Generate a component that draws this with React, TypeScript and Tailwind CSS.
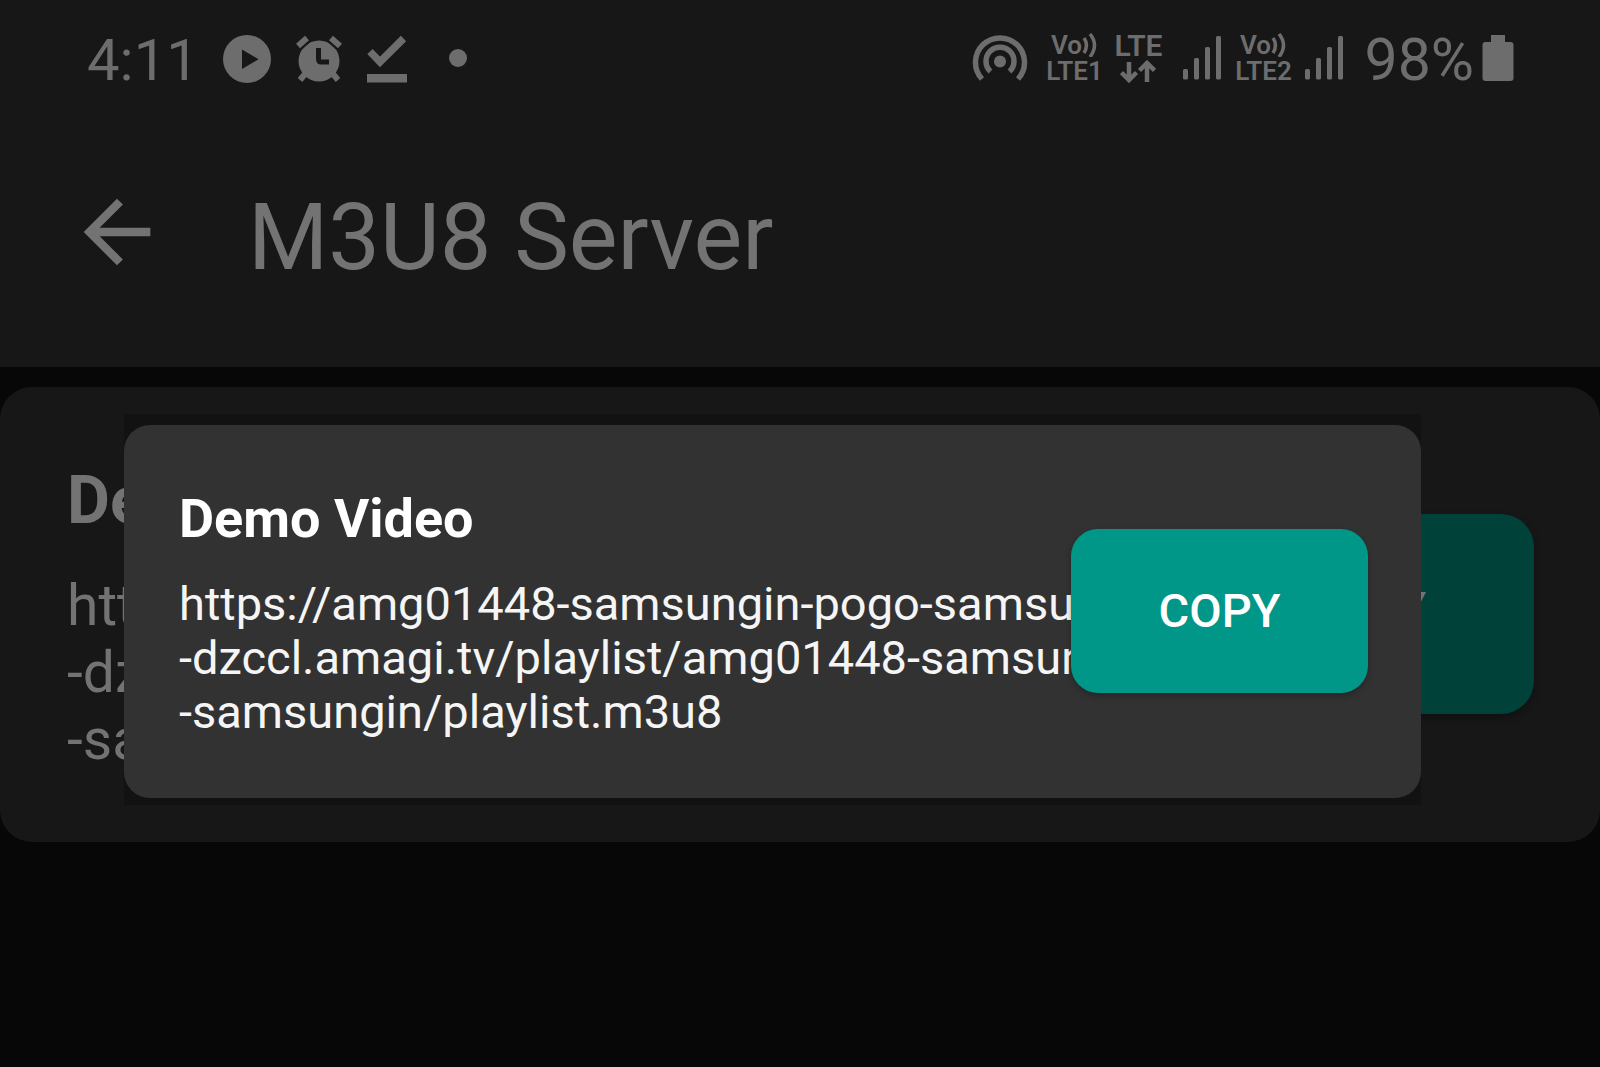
import React from "react";

const URL_LINES = [
  "https://amg01448-samsungin-pogo-samsu",
  "-dzccl.amagi.tv/playlist/amg01448-samsun",
  "-samsungin/playlist.m3u8",
];

function PlayIcon() {
  return (
    <svg className="size-12 shrink-0" viewBox="0 0 48 48" aria-hidden="true">
      <path
        fill="currentColor"
        fillRule="evenodd"
        d="M24 0a24 24 0 1 1 0 48a24 24 0 1 1 0-48zM19 14.500v19.500l16.500-9.750z"
      />
    </svg>
  );
}

function AlarmIcon() {
  return (
    <svg className="size-12 shrink-0" viewBox="0 0 48 48" fill="none" aria-hidden="true">
      <circle cx="24" cy="26" r="20.500" fill="currentColor" />
      <g stroke="currentColor" strokeWidth="6">
        <path d="M3 11L12 3" />
        <path d="M45 11L36 3" />
        <path d="M10 39L5 45" />
        <path d="M38 39L43 45" />
      </g>
      <path d="M5.500 15.500L16.500 5.500" stroke="#171717" strokeWidth="1" />
      <path d="M42.500 15.500L31.500 5.500" stroke="#171717" strokeWidth="1" />
      <path d="M23.500 13v11q0 3 3 3h7.500" stroke="#171717" strokeWidth="5" />
    </svg>
  );
}

function DoneIcon() {
  return (
    <svg className="h-12 w-10 shrink-0" viewBox="0 0 40 48" fill="none" aria-hidden="true">
      <path d="M3 16.500L13 27L36.500 3.500" stroke="currentColor" strokeWidth="7.500" />
      <rect x="0" y="39" width="40" height="8.500" fill="currentColor" />
    </svg>
  );
}

function HotspotIcon() {
  return (
    <svg className="h-12 w-14 shrink-0" viewBox="0 0 56 48" fill="none" aria-hidden="true">
      <circle cx="28" cy="27.500" r="6" fill="currentColor" />
      <g stroke="currentColor" strokeWidth="5.500">
        <path d="M18.500 37.500A14 14 0 1 1 37.500 37.500" />
        <path d="M10 45A24.500 24.500 0 1 1 46 45" />
      </g>
    </svg>
  );
}

function VolteLabel({ sim }: { sim: string }) {
  return (
    <div className="flex w-[60px] shrink-0 flex-col items-center text-[26px] font-semibold leading-[26px]">
      <div className="flex items-center">
        <span>Vo</span>
        <svg className="h-6 w-4" viewBox="0 0 16 24" fill="none" stroke="currentColor" strokeWidth="3.500" aria-hidden="true">
          <path d="M2 5Q7 12 2 20" />
          <path d="M8 1Q17 12 8 24" />
        </svg>
      </div>
      <span>{sim}</span>
    </div>
  );
}

function LteData() {
  return (
    <div className="flex w-[52px] shrink-0 flex-col items-center">
      <span className="text-[30px] font-semibold leading-[28px]">LTE</span>
      <svg className="h-6 w-9" viewBox="0 0 36 24" fill="none" stroke="currentColor" strokeWidth="4.500" aria-hidden="true">
        <path d="M9 2v17M1.500 12.500L9 20L16.500 12.500" />
        <path d="M27 22V4M19.500 10.500L27 3L34.500 10.500" />
      </svg>
    </div>
  );
}

function SignalIcon() {
  return (
    <svg className="h-11 w-10 shrink-0" viewBox="0 0 40 44" fill="currentColor" aria-hidden="true">
      <rect x="1" y="33" width="5" height="10.500" rx="1.500" />
      <rect x="12" y="22" width="5" height="21.500" rx="1.500" />
      <rect x="23" y="11" width="5" height="32.500" rx="1.500" />
      <rect x="34" y="0" width="5" height="43.500" rx="1.500" />
    </svg>
  );
}

function BatteryIcon() {
  return (
    <svg className="h-[46px] w-8 shrink-0" viewBox="0 0 32 46" fill="currentColor" aria-hidden="true">
      <path d="M9 0h14v7h5.500a3 3 0 0 1 3 3v33a3 3 0 0 1-3 3h-25a3 3 0 0 1-3-3V10a3 3 0 0 1 3-3H9z" />
    </svg>
  );
}

function StatusBar() {
  return (
    <div className="flex h-[120px] items-center justify-between pl-[87px] pr-[86px] text-[#6d6d6d]">
      <div className="flex items-center">
        <span className="text-[58px] leading-[60px]">4:11</span>
        <div className="mb-[2px] ml-6 flex items-center gap-6">
          <PlayIcon />
          <AlarmIcon />
          <DoneIcon />
        </div>
        <span className="mb-1 ml-[42px] size-[18px] rounded-full bg-current" />
      </div>
      <div className="flex items-center">
        <div className="mb-1 flex items-center">
          <HotspotIcon />
          <div className="ml-4 flex items-center gap-2">
            <VolteLabel sim="LTE1" />
            <LteData />
          </div>
          <div className="ml-[18px] flex items-center gap-[11px]">
            <SignalIcon />
            <VolteLabel sim="LTE2" />
            <SignalIcon />
          </div>
        </div>
        <span className="ml-5 text-[59px] leading-[60px]">98%</span>
        <div className="mb-1 ml-2">
          <BatteryIcon />
        </div>
      </div>
    </div>
  );
}

function AppBar() {
  return (
    <header className="bg-[#171717]">
      <StatusBar />
      <div className="flex items-start pb-[73px] pl-[67px] pt-[62px] text-[#737373]">
        <button type="button" aria-label="Back" className="shrink-0">
          <svg className="size-[100px]" viewBox="0 0 24 24" fill="currentColor" aria-hidden="true">
            <path d="M20 11H7.830l5.590-5.590L12 4l-8 8 8 8 1.410-1.410L7.830 13H20v-2z" />
          </svg>
        </button>
        <h1 className="ml-[81px] text-[92px] leading-[112px]">M3U8 Server</h1>
      </div>
    </header>
  );
}

function UrlLines() {
  return (
    <>
      {URL_LINES.map((line) => (
        <span key={line} className="block">
          {line}
        </span>
      ))}
    </>
  );
}

function ListCard() {
  return (
    <article
      aria-hidden="true"
      className="mt-5 flex items-center rounded-[32px] bg-[#171717] pb-[69px] pl-[67px] pr-[66px] pt-[75px] text-[#737373]"
    >
      <div className="w-0 flex-1 overflow-hidden whitespace-nowrap">
        <h2 className="text-[66px] font-bold leading-[78px]">Demo Video</h2>
        <p className="mt-8 text-[57px] leading-[67px]">
          <UrlLines />
        </p>
      </div>
      <button
        type="button"
        tabIndex={-1}
        className="mb-2 h-[200px] w-[363px] shrink-0 rounded-[33px] bg-[#00423a] text-[57px] font-medium shadow-[0_4px_8px_rgba(0,0,0,0.3)]"
      >
        COPY
      </button>
    </article>
  );
}

function CopyDialog() {
  return (
    <div className="absolute left-[124px] right-[179px] top-[414px] bg-[#121212] pb-[7px] pt-[11px]">
      <section
        role="dialog"
        aria-labelledby="dialog-title"
        className="flex items-center rounded-[26px] bg-[#323232] pb-[59px] pl-[55px] pr-[53px] pt-[62px] text-white"
      >
        <div className="w-0 flex-1 overflow-hidden whitespace-nowrap">
          <h2 id="dialog-title" className="text-[54px] font-bold leading-[64px]">
            Demo Video
          </h2>
          <p className="mt-[26px] text-[47px] leading-[54px] text-[#f5f5f5]">
            <UrlLines />
          </p>
        </div>
        <button
          type="button"
          className="mb-1 h-[164px] w-[297px] shrink-0 rounded-[27px] bg-[#009688] text-[47px] font-medium shadow-[0_3px_6px_rgba(0,0,0,0.25)]"
        >
          COPY
        </button>
      </section>
    </div>
  );
}

export default function App() {
  return (
    <div className="relative min-h-screen bg-[#070707] font-[Roboto,sans-serif]">
      <AppBar />
      <main>
        <ListCard />
        <CopyDialog />
      </main>
    </div>
  );
}
